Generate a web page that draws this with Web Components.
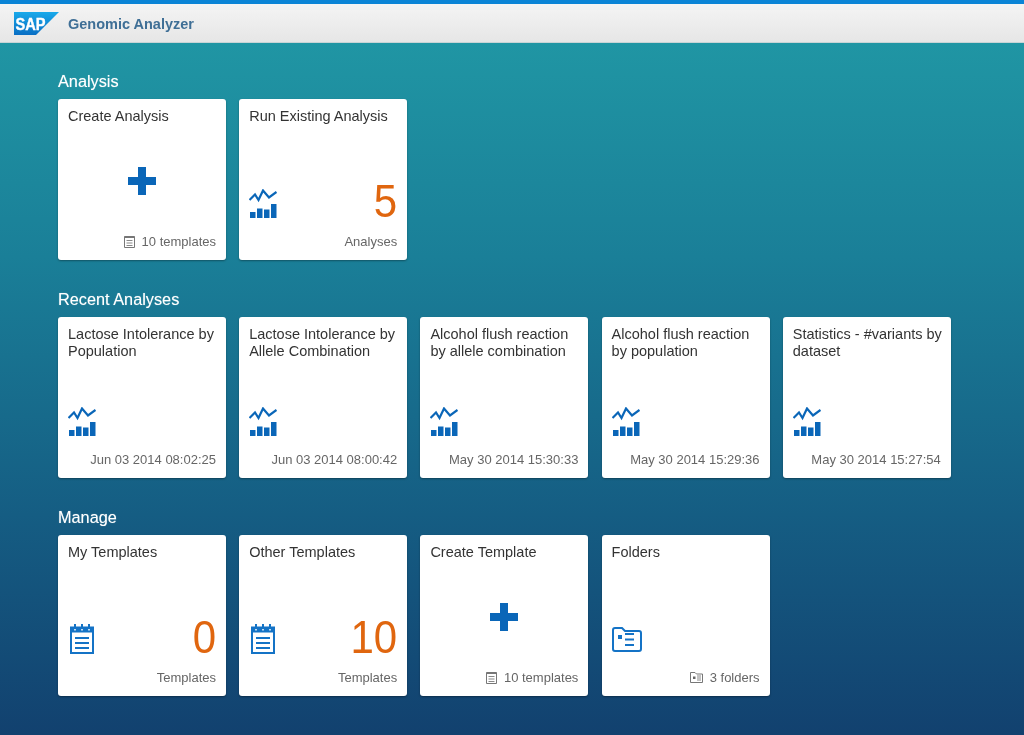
<!DOCTYPE html>
<HTML>
<HEAD>
  <meta charset="utf-8">
  <title>Genomic Analyzer</title>
  <style>
    html, body { margin: 0; height: 100%; }
    body {
      font-family: "Liberation Sans", Arial, sans-serif;
      background: linear-gradient(#219aa6 0, #1a7f98 35%, #155d83 70%, #12416f 100%);
      overflow: hidden;
    }
    #page { display: block; padding: 13px 0 0 58px; filter: blur(.3px); }
    app-header { filter: blur(.3px); }
  </style>
</HEAD>

<BODY>

<template id="app-header">
  <style>
    :host {
      display: flex;
      align-items: center;
      height: 39px;
      border-top: 4px solid #0a84d6;
      background: linear-gradient(#f4f4f4, #e6e6e6);
      box-shadow: inset 0 -1px 0 #c8d4d6;
      padding-left: 14px;
      gap: 9px;
    }
    svg { display: block; }
    span {
      font-size: 14.5px;
      font-weight: bold;
      color: #3f6f96;
      margin-top: 1px;
    }
  </style>
  <svg width="45" height="23" viewBox="0 0 45 23">
    <defs>
      <linearGradient id="sapg" x1="0" y1="0" x2="0" y2="1">
        <stop offset="0" stop-color="#19a9ea"/>
        <stop offset="1" stop-color="#0a6fc4"/>
      </linearGradient>
    </defs>
    <polygon points="0,0 45,0 22,23 0,23" fill="url(#sapg)"/>
    <text x="1.500" y="18" font-family="Liberation Sans" font-weight="bold" font-size="16" textLength="30" lengthAdjust="spacingAndGlyphs" stroke="#fff" stroke-width=".4" fill="#fff">SAP</text>
  </svg>
  <span><slot></slot></span>
</template>

<template id="tile-group">
  <style>
    :host { display: block; height: 218px; }
    h2 {
      margin: 0;
      height: 43px;
      padding-top: 15px;
      box-sizing: border-box;
      font-size: 16.3px;
      line-height: 20px;
      font-weight: normal;
      color: #fff;
      text-shadow: 0 0 1px rgba(255,255,255,.5);
    }
    #tiles { display: flex; gap: 13.2px; }
  </style>
  <h2 id="heading"></h2>
  <div id="tiles"><slot></slot></div>
</template>

<template id="launch-tile">
  <style>
    :host {
      display: flex;
      flex-direction: column;
      box-sizing: border-box;
      width: 168px;
      height: 161px;
      padding: 9px 10px 11px 10px;
      background: #fff;
      border-radius: 3px;
      box-shadow: 0 1px 2px rgba(0,0,0,.35);
      font-size: 14.5px;
      color: #333;
    }
    #title { line-height: 17px; height: 34px; margin-right: -3px; }
    #middle {
      flex: 1;
      display: flex;
      align-items: flex-end;
      justify-content: space-between;
      min-height: 0;
    }
    #number {
      font-size: 42px;
      line-height: 44px;
      color: #e0660f;
      margin-bottom: 2px;
      transform: scaleY(1.08);
    }
    #foot {
      display: flex;
      justify-content: flex-end;
      align-items: center;
      gap: 7px;
      height: 15px;
      margin-top: 8px;
      font-size: 13px;
      line-height: 15px;
      color: #666;
    }
    :host([plus]) #middle { justify-content: center; align-items: flex-start; }
  </style>
  <div id="title"></div>
  <div id="middle"><slot name="icon"></slot><span id="number"></span></div>
  <div id="foot"><slot name="foot-icon"></slot><span id="info"></span></div>
</template>

<template id="tile-icon">
  <style>
    :host { display: block; line-height: 0; }
    svg { display: block; }
  </style>
  <svg id="svg"></svg>
</template>

<script>
  const ICONS = {
    plus: { w: 28, h: 28, body: '<path d="M10 0h8v10H28v8H18V28h-8V18H0v-8h10z" fill="#0a66b8"/>' },
    chart: { w: 28, h: 29, body: '<polyline points="0.500,11 6,5.500 9.500,11 14,1.500 20,8.500 27.500,3" fill="none" stroke="#0a66b8" stroke-width="2.200"/><path d="M1 23h5.500v6H1zM8 19.500h5.500V29H8zM15 20.500h5.500V29H15zM22 15h5.500v14H22z" fill="#0a66b8"/>' },
    notes: { w: 24, h: 31, body: '<path d="M1 4.500h22v25.500H1z" fill="none" stroke="#1473c6" stroke-width="2"/><path d="M1 4.500h22v5H1z" fill="#1473c6"/><path d="M5 1v6M12 1v6M19 1v6" stroke="#1473c6" stroke-width="2"/><path d="M5 6v1.500M12 6v1.500M19 6v1.500" stroke="#fff" stroke-width="1.500"/><path d="M5 15h14M5 20h14M5 25h14" stroke="#1473c6" stroke-width="2"/>' },
    folder: { w: 30, h: 25, body: '<path d="M1 22V3q0-2 2-2h7l3 3h14q2 0 2 2v16q0 2-2 2H3q-2 0-2-2z" fill="none" stroke="#1473c6" stroke-width="2"/><path d="M6 8h4v4H6zM13 6h9v2h-9zM13 11.500h9v2h-9zM13 17h9v2h-9z" fill="#1473c6"/>' },
    notesSmall: { w: 11, h: 13, body: '<path d="M.5 1.500h10v11H.5z" fill="none" stroke="#777"/><path d="M.5 1.500h10v1.500H.5z" fill="#777"/><path d="M2.500 5.500h6M2.500 8h6M2.500 10.500h6" stroke="#888"/>' },
    folderSmall: { w: 13, h: 11, body: '<path d="M.5 10.500V.5h4.500l1.500 1.500h6v8.500z" fill="none" stroke="#777"/><path d="M7 4h4M7 6h4M7 8h4" stroke="#888"/><path d="M3 4.500h2.500v2.500H3z" fill="#666"/>' }
  };

  class AppHeader extends HTMLElement {
    constructor() {
      super();
      this.attachShadow({ mode: "open" })
        .appendChild(document.getElementById("app-header").content.cloneNode(true));
    }
  }

  class TileGroup extends HTMLElement {
    constructor() {
      super();
      this.attachShadow({ mode: "open" })
        .appendChild(document.getElementById("tile-group").content.cloneNode(true));
    }
    connectedCallback() {
      this.shadowRoot.getElementById("heading").textContent = this.getAttribute("heading");
    }
  }

  class LaunchTile extends HTMLElement {
    constructor() {
      super();
      this.attachShadow({ mode: "open" })
        .appendChild(document.getElementById("launch-tile").content.cloneNode(true));
    }
    connectedCallback() {
      const s = this.shadowRoot;
      s.getElementById("title").textContent = this.getAttribute("title-text");
      s.getElementById("number").textContent = this.getAttribute("number") || "";
      s.getElementById("info").textContent = this.getAttribute("info") || "";
    }
  }

  class TileIcon extends HTMLElement {
    constructor() {
      super();
      this.attachShadow({ mode: "open" })
        .appendChild(document.getElementById("tile-icon").content.cloneNode(true));
    }
    connectedCallback() {
      const icon = ICONS[this.getAttribute("name")];
      const svg = this.shadowRoot.getElementById("svg");
      svg.setAttribute("width", icon.w);
      svg.setAttribute("height", icon.h);
      svg.setAttribute("viewBox", `0 0 ${icon.w} ${icon.h}`);
      svg.innerHTML = icon.body;
      if (this.hasAttribute("margin")) { this.style.margin = this.getAttribute("margin"); }
    }
  }

  customElements.define("app-header", AppHeader);
  customElements.define("tile-group", TileGroup);
  customElements.define("launch-tile", LaunchTile);
  customElements.define("tile-icon", TileIcon);
</script>

<app-header>Genomic Analyzer</app-header>

<div id="page">
  <tile-group heading="Analysis">
    <launch-tile plus title-text="Create Analysis" info="10 templates">
      <tile-icon slot="icon" name="plus" margin="25px 0 0 0"></tile-icon>
      <tile-icon slot="foot-icon" name="notesSmall"></tile-icon>
    </launch-tile>
    <launch-tile title-text="Run Existing Analysis" number="5" info="Analyses">
      <tile-icon slot="icon" name="chart" margin="0 0 8px 0"></tile-icon>
    </launch-tile>
  </tile-group>

  <tile-group heading="Recent Analyses">
    <launch-tile title-text="Lactose Intolerance by Population" info="Jun 03 2014 08:02:25">
      <tile-icon slot="icon" name="chart" margin="0 0 8px 0"></tile-icon>
    </launch-tile>
    <launch-tile title-text="Lactose Intolerance by Allele Combination" info="Jun 03 2014 08:00:42">
      <tile-icon slot="icon" name="chart" margin="0 0 8px 0"></tile-icon>
    </launch-tile>
    <launch-tile title-text="Alcohol flush reaction by allele combination" info="May 30 2014 15:30:33">
      <tile-icon slot="icon" name="chart" margin="0 0 8px 0"></tile-icon>
    </launch-tile>
    <launch-tile title-text="Alcohol flush reaction by population" info="May 30 2014 15:29:36">
      <tile-icon slot="icon" name="chart" margin="0 0 8px 0"></tile-icon>
    </launch-tile>
    <launch-tile title-text="Statistics - #variants by dataset" info="May 30 2014 15:27:54">
      <tile-icon slot="icon" name="chart" margin="0 0 8px 0"></tile-icon>
    </launch-tile>
  </tile-group>

  <tile-group heading="Manage">
    <launch-tile title-text="My Templates" number="0" info="Templates">
      <tile-icon slot="icon" name="notes" margin="0 0 8px 2px"></tile-icon>
    </launch-tile>
    <launch-tile title-text="Other Templates" number="10" info="Templates">
      <tile-icon slot="icon" name="notes" margin="0 0 8px 2px"></tile-icon>
    </launch-tile>
    <launch-tile plus title-text="Create Template" info="10 templates">
      <tile-icon slot="icon" name="plus" margin="25px 0 0 0"></tile-icon>
      <tile-icon slot="foot-icon" name="notesSmall"></tile-icon>
    </launch-tile>
    <launch-tile title-text="Folders" info="3 folders">
      <tile-icon slot="icon" name="folder" margin="0 0 10px 0"></tile-icon>
      <tile-icon slot="foot-icon" name="folderSmall"></tile-icon>
    </launch-tile>
  </tile-group>
</div>

</BODY>
</HTML>
